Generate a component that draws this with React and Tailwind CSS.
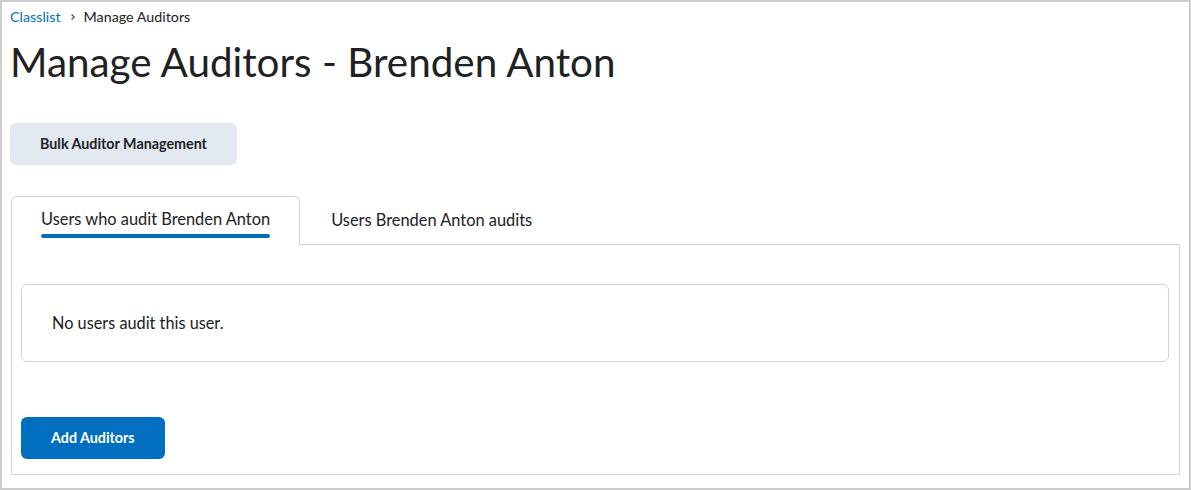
import React from 'react';

const App = () => {
  return (
    <div
      className="w-[1191px] h-[490px] border-2 border-[#cdcdcd] bg-white text-[#202122] px-[8px] overflow-hidden"
      style={{ fontFamily: 'Lato, "Noto Sans", sans-serif' }}
    >
      {/* Breadcrumb */}
      <nav className="flex items-center pt-[5px] h-[25px] text-[14.3px] leading-[18px]">
        <span className="text-[#006fbf]">Classlist</span>
        <svg className="ml-[7px] mr-[6px] w-[10px] h-[10px]" viewBox="0 0 10 10" fill="none">
          <path d="M4 3l2.2 2L4 7" stroke="#494c4e" strokeWidth="1.3" strokeLinecap="round" strokeLinejoin="round" />
        </svg>
        <span className="text-[#202122]">Manage Auditors</span>
      </nav>

      {/* Title */}
      <h1 className="mt-[11px] text-[40.4px] leading-[48px] font-normal">
        Manage Auditors - Brenden Anton
      </h1>

      <button className="mt-[37px] h-[42px] px-[30px] rounded-[6px] bg-[#e3e9f1] text-[14.3px] font-bold text-[#202122]">
        Bulk Auditor Management
      </button>

      {/* Tabs */}
      <div className="mt-[31px] ml-px mr-px">
        <div className="flex items-end">
          <div className="relative z-10 -mb-px h-[49px] border border-b-0 border-[#cdd5dc] rounded-t-[6px] bg-white pl-[29px] pr-[29px] pt-[12px] flex flex-col items-start">
            <span className="text-[16.4px] leading-[20px]">Users who audit Brenden Anton</span>
            <span className="mt-[5px] h-[4px] w-full rounded-full bg-[#006fbf]" />
          </div>
          <div className="h-[49px] px-[31px] pt-[12px] -mb-px">
            <span className="text-[16.4px] leading-[20px]">Users Brenden Anton audits</span>
          </div>
        </div>

        {/* Panel */}
        <div className="border border-[#cdd5dc] h-[231px] pl-[9px] pr-[10px] pt-[39px]">
          <div className="h-[78px] border border-[#cdd5dc] rounded-[6px] flex items-center pl-[30px]">
            <span className="text-[16.3px] leading-[20px]">No users audit this user.</span>
          </div>
          <button className="mt-[55px] h-[42px] px-[30px] rounded-[6px] bg-[#006fbf] text-white text-[14.3px] font-bold">
            Add Auditors
          </button>
        </div>
      </div>
    </div>
  );
};

export default App;
